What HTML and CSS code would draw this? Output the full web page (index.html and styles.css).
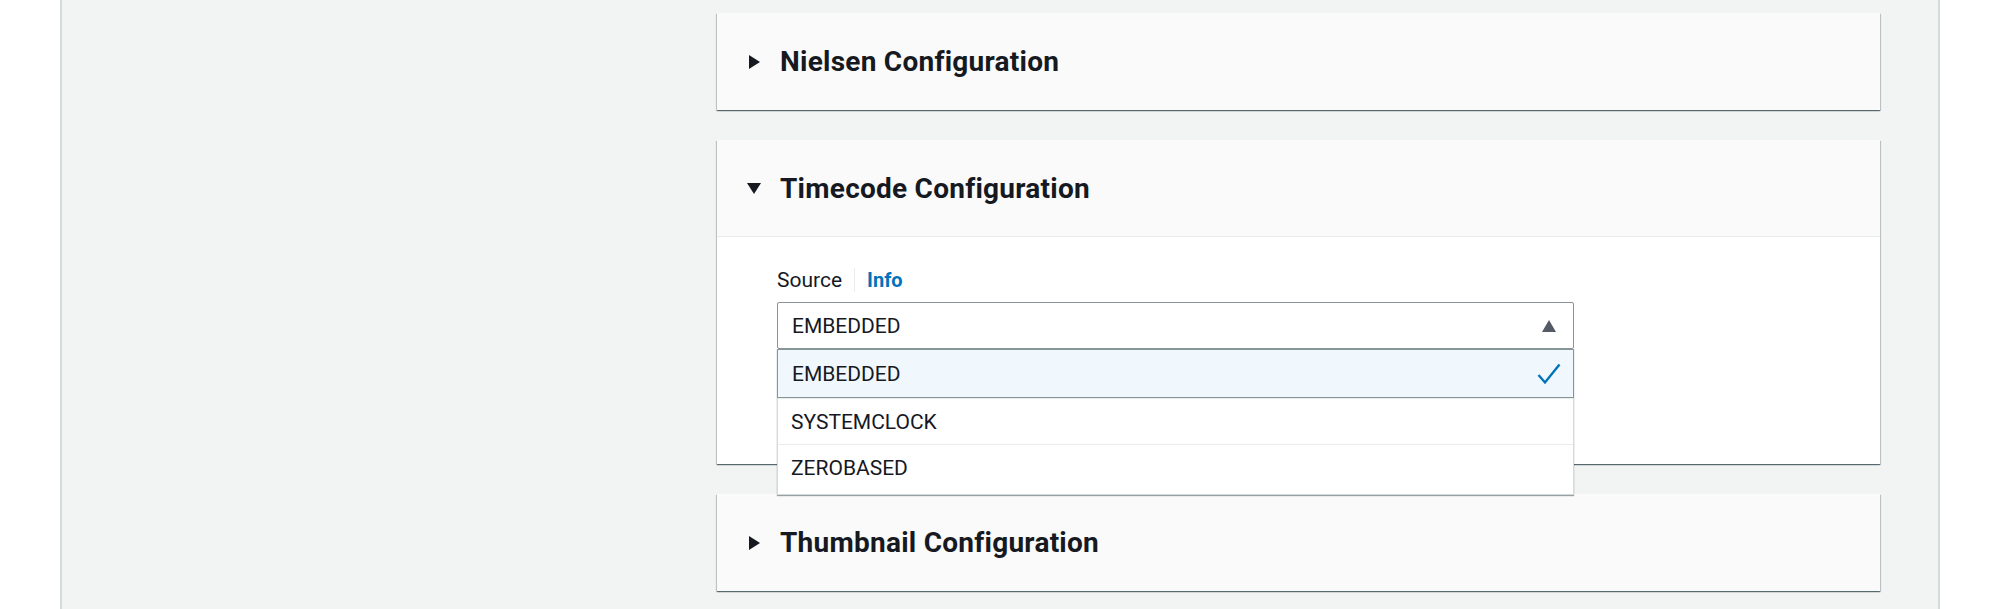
FILE: index.html
```html
<!DOCTYPE html>
<html lang="en">
    <head>
        <meta charset="UTF-8">
        <title>Channel configuration</title>
        <link rel="stylesheet" href="styles.css">
    </head>
    <body>
        <div class="layout">
            <div class="gutter"></div>
            <main class="content">
                <section class="panel">
                    <header class="panel-head">
                        <span class="caret caret-right"></span>
                        <h2>Nielsen Configuration</h2>
                    </header>
                </section>

                <section class="panel">
                    <header class="panel-head open">
                        <span class="caret caret-down"></span>
                        <h2>Timecode Configuration</h2>
                    </header>
                    <div class="panel-body">
                        <div class="field-label">
                            <label>Source</label>
                            <span class="sep"></span>
                            <a class="info" href="#">Info</a>
                        </div>
                        <div class="select-wrap">
                            <div class="select">
                                <span>EMBEDDED</span>
                                <svg class="select-caret" width="16" height="14" viewBox="0 0 16 14">
                                    <polygon points="8,1 15,13 1,13" fill="#545b64"/>
                                </svg>
                            </div>
                            <ul class="options">
                                <li class="option selected">
                                    <span>EMBEDDED</span>
                                    <svg width="24" height="22" viewBox="0 0 24 22">
                                        <polyline points="1.5,12 8,19.5 22.5,1.5" fill="none" stroke="#0073bb" stroke-width="2.4"/>
                                    </svg>
                                </li>
                                <li class="option">SYSTEMCLOCK</li>
                                <li class="option last">ZEROBASED</li>
                            </ul>
                        </div>
                    </div>
                </section>

                <section class="panel">
                    <header class="panel-head">
                        <span class="caret caret-right"></span>
                        <h2>Thumbnail Configuration</h2>
                    </header>
                </section>
            </main>
            <div class="gutter"></div>
        </div>
    </body>
</html>
```

FILE: styles.css
```css
* {
    box-sizing: border-box;
}

body {
    margin: 0;
    background: #fff;
    color: #16191f;
    font-family: Roboto, "Liberation Sans", sans-serif;
}

.layout {
    display: flex;
    height: 100vh;
    overflow: hidden;
}

.gutter {
    width: 60px;
    flex-shrink: 0;
}

.content {
    flex: 1;
    display: flex;
    flex-direction: column;
    gap: 30px;
    padding: 13px 58px 0 655px;
    background: #f2f3f3;
    border-left: 2px solid #d5dbdb;
    border-right: 2px solid #d5dbdb;
}

.panel {
    background: #fff;
    box-shadow: 0 1px 1px 0 rgba(0, 28, 36, 0.5), 1px 1px 1px 0 rgba(0, 28, 36, 0.15), -1px 1px 1px 0 rgba(0, 28, 36, 0.15);
}

.panel-head {
    display: flex;
    align-items: center;
    gap: 20px;
    height: 97px;
    padding-left: 32px;
    background: #fafafa;
}

.panel-head.open {
    border-bottom: 1px solid #eaeded;
}

.panel-head h2 {
    margin: 0;
    font-size: 28px;
    font-weight: 700;
    letter-spacing: 0.25px;
    color: #16191f;
}

.caret {
    width: 0;
    height: 0;
}

.caret-right {
    border-top: 7px solid transparent;
    border-bottom: 7px solid transparent;
    border-left: 11px solid #16191f;
}

.caret-down {
    border-left: 7px solid transparent;
    border-right: 7px solid transparent;
    border-top: 11px solid #16191f;
    margin-left: -2px;
    margin-right: -1px;
}

.panel-body {
    height: 227px;
    padding: 30px 0 0 60px;
}

.field-label {
    display: flex;
    align-items: center;
    height: 26px;
    margin-bottom: 9px;
    font-size: 21px;
}

.sep {
    width: 1px;
    height: 24px;
    margin: 0 12px 0 12px;
    background: #eaeded;
}

.info {
    color: #0073bb;
    font-weight: 700;
    font-size: 20px;
    text-decoration: none;
}

.select-wrap {
    position: relative;
    width: 797px;
}

.select {
    display: flex;
    align-items: center;
    justify-content: space-between;
    height: 47px;
    padding: 0 16px 0 14px;
    border: 1px solid #879596;
    border-radius: 2px;
    font-size: 21px;
}

.options {
    position: absolute;
    top: 100%;
    left: 0;
    right: 0;
    margin: 0;
    padding: 0;
    list-style: none;
    background: #fff;
    border: 1px solid #d5dbdb;
    border-top: none;
    box-shadow: 0 1px 1px 0 rgba(0, 28, 36, 0.4);
    z-index: 2;
}

.option {
    display: flex;
    align-items: center;
    justify-content: space-between;
    height: 46px;
    padding: 0 12px 0 13px;
    font-size: 21px;
    border-top: 1px solid #eaeded;
}

.option.selected {
    height: 49px;
    margin: 0 -1px;
    padding-left: 14px;
    background: #f1f8fd;
    border: 1px solid #879596;
}

.option.last {
    height: 50px;
    padding-bottom: 3px;
}
```
